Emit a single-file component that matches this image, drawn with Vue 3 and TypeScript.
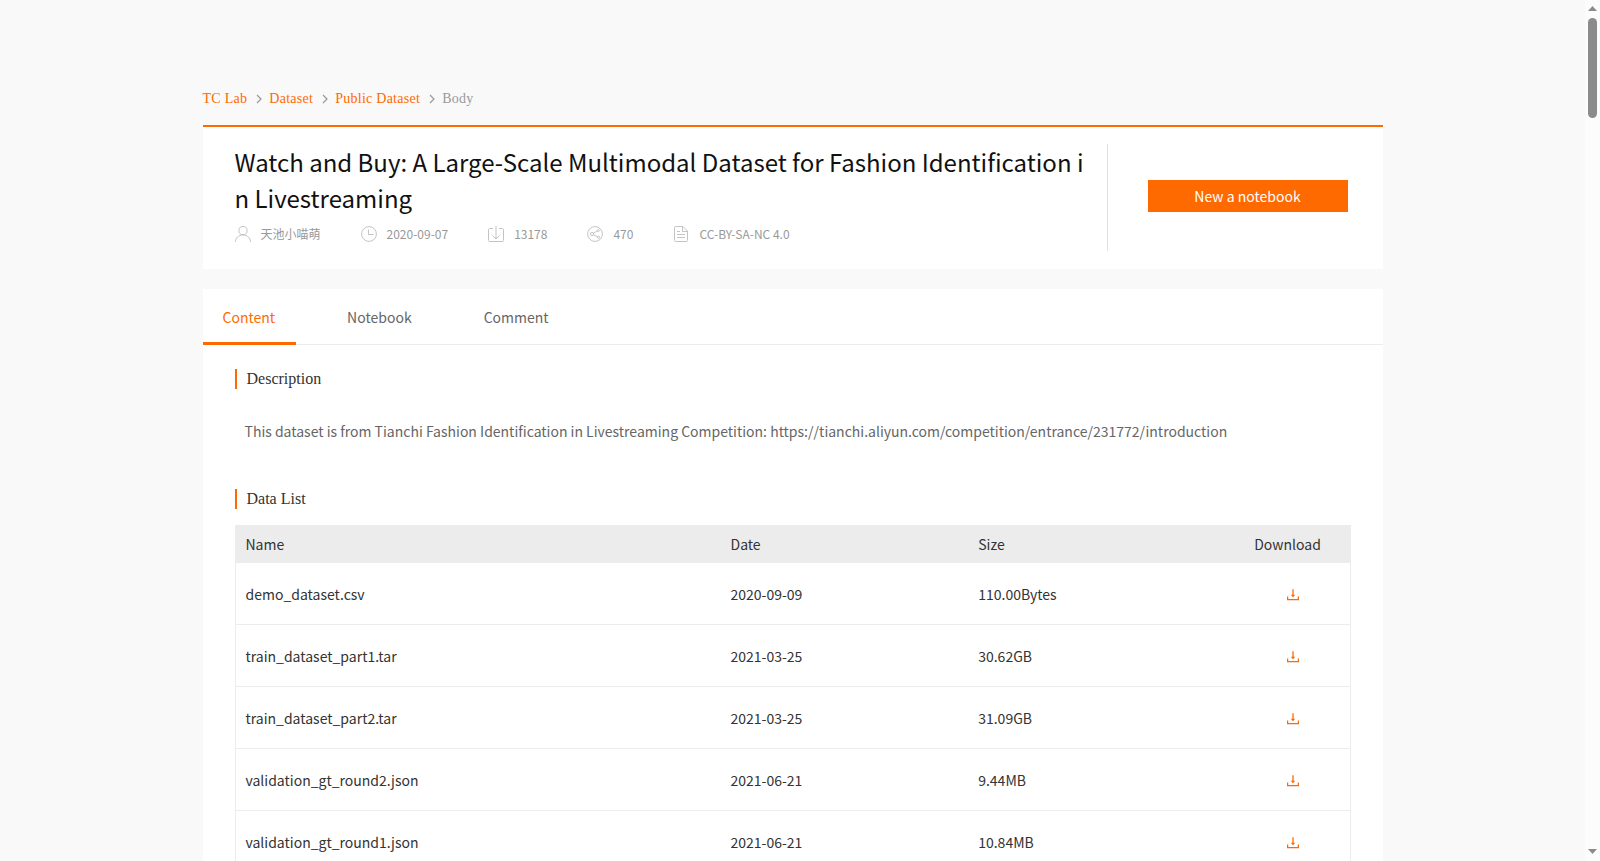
<script setup lang="ts">
interface DataFile {
  name: string
  date: string
  size: string
}

const crumbs: string[] = ['TC Lab', 'Dataset', 'Public Dataset']
const tabs: string[] = ['Content', 'Notebook', 'Comment']
const files: DataFile[] = [
  { name: 'demo_dataset.csv', date: '2020-09-09', size: '110.00Bytes' },
  { name: 'train_dataset_part1.tar', date: '2021-03-25', size: '30.62GB' },
  { name: 'train_dataset_part2.tar', date: '2021-03-25', size: '31.09GB' },
  { name: 'validation_gt_round2.json', date: '2021-06-21', size: '9.44MB' },
  { name: 'validation_gt_round1.json', date: '2021-06-21', size: '10.84MB' },
]
</script>

<template>
  <div class="page">
    <main class="wrap">
      <nav class="crumbs">
        <template v-for="c in crumbs" :key="c">
          <a class="crumb">{{ c }}</a>
          <svg class="chevron" width="6" height="10" viewBox="0 0 6 10"><path d="M1 1l4 4-4 4" /></svg>
        </template>
        <span class="here">Body</span>
      </nav>

      <section class="head">
        <div class="info">
          <h1>Watch and Buy: A Large-Scale Multimodal Dataset for Fashion Identification in Livestreaming</h1>
          <div class="meta">
            <span class="item user">
              <svg width="16" height="16" viewBox="0 0 16 16"><circle cx="8" cy="4.6" r="4.1" /><path d="M.5 16c0-4 3-7 7.500-7s7.500 3 7.500 7" /></svg>
              天池小喵萌
            </span>
            <span class="item date">
              <svg width="16" height="16" viewBox="0 0 16 16"><circle cx="8" cy="8" r="7.400" /><path d="M7.500 3.500v5h5" /></svg>
              2020-09-07
            </span>
            <span class="item loads">
              <svg width="16" height="16" viewBox="0 0 16 16"><path d="M5 2.500H1.500q-1 0-1 1v11q0 1 1 1h13q1 0 1-1v-11q0-1-1-1H11M8 0v13M4.500 9.500L8 13l3.500-3.500" /></svg>
              13178
            </span>
            <span class="item shares">
              <svg width="16" height="16" viewBox="0 0 16 16"><circle cx="8" cy="8" r="7.400" /><circle cx="5" cy="8" r="1.600" /><circle cx="11.300" cy="4.500" r="1" /><circle cx="11.500" cy="11.300" r="1.100" /><path d="M6.400 7.200l4-2.300M6.400 8.800l4.200 2" /></svg>
              470
            </span>
            <span class="item license">
              <svg width="16" height="16" viewBox="0 0 16 16"><path d="M10 .5H2.500q-1 0-1 1v13q0 1 1 1h11q1 0 1-1V5zM9.500.5V5.500h5M4 5.500h3M4 8.500h8M4 11.500h8" /></svg>
              CC-BY-SA-NC 4.0
            </span>
          </div>
        </div>
        <div class="action"><button type="button">New a notebook</button></div>
      </section>

      <section class="body">
        <div class="tabs">
          <a v-for="(t, i) in tabs" :key="t" class="tab" :class="{ active: i === 0 }">{{ t }}</a>
        </div>
        <div class="content">
          <h2>Description</h2>
          <p>This dataset is from Tianchi Fashion Identification in Livestreaming Competition: https://tianchi.aliyun.com/competition/entrance/231772/introduction</p>
          <h2>Data List</h2>
          <div class="table">
            <div class="row header">
              <span>Name</span><span>Date</span><span>Size</span><span class="dl">Download</span>
            </div>
            <div v-for="f in files" :key="f.name" class="row">
              <span>{{ f.name }}</span><span>{{ f.date }}</span><span>{{ f.size }}</span>
              <span class="dl icon">
                <svg width="12" height="12" viewBox="0 0 12 12"><path d="M.6 7.500v3.100h10.800V7.500" /><path d="M6 .2v7" /><path class="tip" d="M3.800 5.700h4.400L6 8.200z" /></svg>
              </span>
            </div>
          </div>
        </div>
      </section>
    </main>
    <aside class="scroll">
      <svg width="9" height="5" viewBox="0 0 9 5"><path d="M4.500 0L9 5H0z" /></svg>
      <i class="thumb"></i>
      <svg class="down" width="9" height="5" viewBox="0 0 9 5"><path d="M0 0h9L4.500 5z" /></svg>
    </aside>
  </div>
</template>

<style>
body {
  margin: 0;
  overflow: hidden;
}
</style>

<style scoped>
.page {
  display: flex;
  height: 861px;
  overflow: hidden;
  background: #f9f9f9;
  font-family: "Noto Sans CJK SC", sans-serif;
  color: #333;
}
.wrap {
  width: 1180px;
  margin: 0 auto;
  padding-top: 85px;
}
.crumbs {
  display: flex;
  align-items: center;
  height: 28px;
  margin-bottom: 12px;
  font: 14px/28px "Liberation Serif", serif;
  letter-spacing: 0.25px;
  color: #ff6a00;
}
.chevron {
  margin: 0 7.200px 0 9px;
  fill: none;
  stroke: #999;
  stroke-width: 1.2;
}
.here {
  color: #999;
}
.head {
  box-sizing: border-box;
  display: flex;
  height: 144px;
  padding: 17px 0 18px;
  border-top: 2px solid #ff6a00;
  background: #fff;
}
.info {
  box-sizing: border-box;
  width: 905px;
  padding: 0 20px 0 32px;
  border-right: 1px solid #e1e1e1;
}
h1 {
  margin: 0;
  font-size: 24px;
  font-weight: 400;
  line-height: 36px;
  color: #111;
  word-break: break-all;
}
.meta {
  display: flex;
  height: 35px;
  font-size: 12px;
  line-height: 17px;
  color: #999;
}
.item {
  display: flex;
  align-items: center;
  gap: 10px;
  margin-right: 40px;
  white-space: nowrap;
}
.item svg {
  flex: none;
  fill: none;
  stroke: #c4c4c4;
}
.action {
  flex: 1;
  padding: 36px 0 0 40px;
}
button {
  width: 200px;
  height: 32px;
  padding: 0;
  border: 0;
  background: #ff6a00;
  color: #fff;
  font: 14px/32px "Noto Sans CJK SC", sans-serif;
}
.body {
  height: 700px;
  margin-top: 20px;
  background: #fff;
}
.tabs {
  box-sizing: border-box;
  display: flex;
  gap: 32px;
  height: 56px;
  border-bottom: 1px solid #ececec;
}
.tab {
  box-sizing: border-box;
  height: 56px;
  padding: 0 20px;
  font-size: 14px;
  line-height: 56px;
  color: #666;
}
.tab.active {
  padding-right: 20.500px;
  margin-right: -0.5px;
  border-bottom: 3px solid #ff6a00;
  color: #ff6a00;
}
.content {
  padding: 24px 32px 0;
}
h2 {
  margin: 0;
  padding-left: 10px;
  border-left: 2px solid #ff6a00;
  font: 16px/20px "Liberation Serif", serif;
}
p {
  margin: 27px 0 43px;
  padding-left: 10px;
  font-size: 14px;
  line-height: 30px;
  color: #666;
}
.table {
  margin-top: 16px;
  border: 1px solid #ececec;
  font-size: 14px;
}
.row {
  display: grid;
  grid-template-columns: 485px 247.700px 257px 1fr;
  align-items: center;
  height: 61px;
  padding-left: 10px;
  border-bottom: 1px solid #ececec;
}
.row.header {
  height: 36px;
  background: #ececec;
}
.dl {
  padding-left: 19px;
}
.dl.icon {
  display: flex;
  padding: 2px 0 0 51.800px;
}
.icon svg {
  fill: none;
  stroke: #ff6a00;
  stroke-width: 1.3;
}
.icon .tip {
  fill: #ff6a00;
  stroke: none;
}
.scroll {
  box-sizing: border-box;
  display: flex;
  flex-direction: column;
  align-items: flex-start;
  width: 15px;
  padding: 6px 3px 7px 3px;
  background: #fcfcfc;
}
.scroll svg {
  fill: #8b8b8b;
}
.thumb {
  width: 9px;
  height: 100px;
  margin-top: 7px;
  border-radius: 5px;
  background: #8b8b8b;
}
.down {
  margin-top: auto;
}
</style>
